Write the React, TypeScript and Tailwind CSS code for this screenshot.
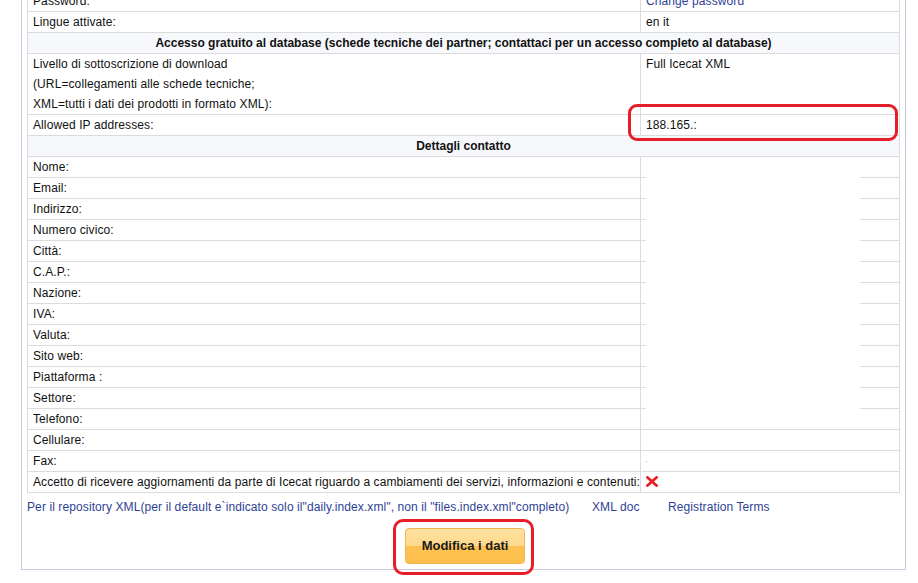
import React from "react";

const font = { fontFamily: '"Liberation Sans", Arial, sans-serif' };

function Row({ label, value, tall }: { label: React.ReactNode; value?: React.ReactNode; tall?: boolean }) {
  return (
    <div className="flex border-b border-[#dcdcdc]">
      <div className={`w-[613px] shrink-0 border-r border-[#dcdcdc] pl-[5px] leading-[20px] whitespace-nowrap ${tall ? "" : "h-[20px]"}`}>
        {label}
      </div>
      <div className="flex-1 pl-[5px] leading-[20px] whitespace-nowrap">{value}</div>
    </div>
  );
}

function Header({ children }: { children: React.ReactNode }) {
  return (
    <div className="h-[21px] border-b border-[#dcdcdc] bg-[#f7f8fc] text-center font-bold leading-[20px] tracking-normal whitespace-nowrap">
      {children}
    </div>
  );
}

export default function App() {
  const contacts = [
    "Nome:",
    "Email:",
    "Indirizzo:",
    "Numero civico:",
    "Città:",
    "C.A.P.:",
    "Nazione:",
    "IVA:",
    "Valuta:",
    "Sito web:",
    "Piattaforma :",
    "Settore:",
    "Telefono:",
    "Cellulare:",
  ];
  return (
    <div className="relative w-[918px] h-[583px] overflow-hidden bg-white text-[12px] tracking-[0.1px] text-[#111]" style={font}>
      <div className="ml-[21px] w-[885px] border-l border-r border-b border-[#c9cce0] px-[5px] pb-[5px]">
        <div className="-mt-[10px] border-l border-r border-t border-[#dcdcdc]">
          <Row label="Password:" value={<span className="text-[#2f3f95]">Change password</span>} />
          <Row label="Lingue attivate:" value="en it" />
          <Header>Accesso gratuito al database (schede tecniche dei partner; contattaci per un accesso completo al database)</Header>
          <Row
            tall
            label={
              <>
                <div>Livello di sottoscrizione di download</div>
                <div>(URL=collegamenti alle schede tecniche;</div>
                <div>XML=tutti i dati dei prodotti in formato XML):</div>
              </>
            }
            value="Full Icecat XML"
          />
          <Row label="Allowed IP addresses:" value="188.165.:" />
          <Header>Dettagli contatto</Header>
          {contacts.map((c) => (
            <Row key={c} label={c} />
          ))}
          <Row label="Fax:" value={<span className="inline-block w-[1px] h-[1px] bg-[#f0a030] align-middle" />} />
          <Row
            label="Accetto di ricevere aggiornamenti da parte di Icecat riguardo a cambiamenti dei servizi, informazioni e contenuti:"
            value={
              <svg width="12" height="11" viewBox="0 0 12 11" className="inline-block align-[-1px]">
                <path d="M1.5 1.5 L10.5 9.5 M10.5 1.5 L1.5 9.5" stroke="#e8202a" strokeWidth="2.8" strokeLinecap="square" />
              </svg>
            }
          />
        </div>
        <div className="mt-[4px] flex h-[20px] items-center leading-[20px] text-[#2f3f95] whitespace-nowrap">
          <span className="w-[565px] shrink-0">
            Per il repository XML(per il default e`indicato solo il"daily.index.xml", non il "files.index.xml"completo)
          </span>
          <span className="w-[76px] shrink-0">XML doc</span>
          <span>Registration Terms</span>
        </div>
        <div className="mt-[11px] flex justify-center pl-[3px]">
          <button className="h-[36px] w-[120px] rounded-[4px] border border-[#f2b44c] bg-[linear-gradient(#fee19f_0%,#fed98c_50%,#fdc252_50%,#fdbf4b_100%)] text-[13px] font-bold tracking-normal text-[#1a1a1a]">
            Modifica i dati
          </button>
        </div>
      </div>

      {/* blank area over contact values */}
      <div className="absolute left-[646px] top-[157px] w-[214px] h-[253px] bg-white" />

      {/* red highlights */}
      <div className="absolute left-[628px] top-[104px] w-[270px] h-[37px] rounded-[9px] border-[3px] border-[#e61e2a]" />
      <div className="absolute left-[393px] top-[519px] w-[141px] h-[56px] rounded-[10px] border-[3px] border-[#e61e2a]" />
    </div>
  );
}
